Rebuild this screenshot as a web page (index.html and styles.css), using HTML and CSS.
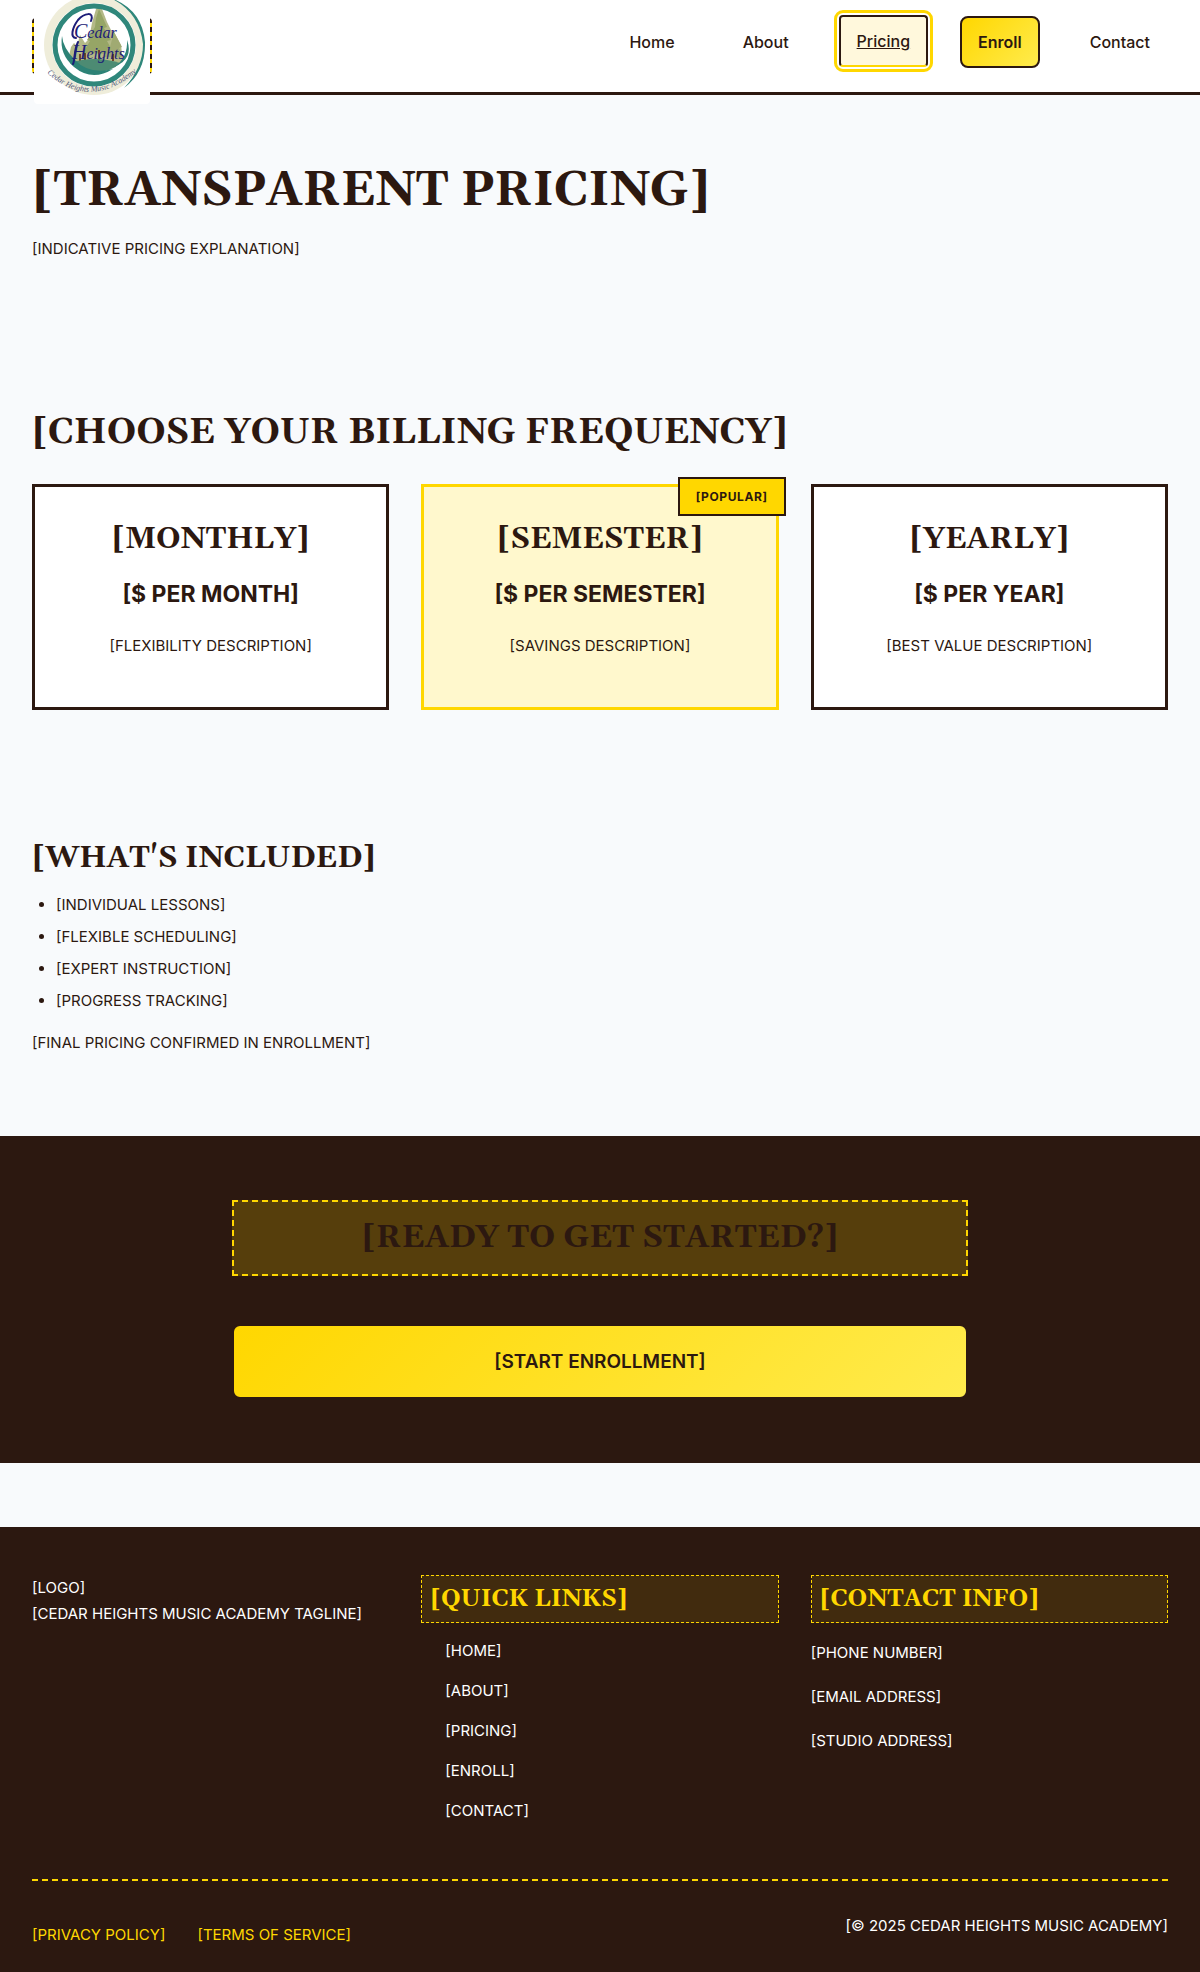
FILE: index.html
```html
<!DOCTYPE html>
<html lang="en">
<head>
<meta charset="utf-8">
<meta name="viewport" content="width=device-width, initial-scale=1">
<title>Pricing - Cedar Heights Music Academy</title>
<link rel="stylesheet" href="styles.css">
</head>
<body>
<header class="site-header">
  <a class="brand" href="#" aria-label="Cedar Heights Music Academy">
    <svg class="brand-logo" viewBox="0 0 116 116">
      <rect width="116" height="116" rx="4" fill="#fff"/>
      <circle cx="60" cy="57" r="50" fill="#efedda"/>
      <circle cx="60" cy="57" r="42" fill="#fff"/>
      <path d="M35 68l2-9 3-4 3 3 3-11 5 8 4-4 3-16 4-14 3-4 3 4 5 13 4 8 3 2 7 13 2 17-8 2-40 1z" fill="#b3b987"/>
      <path d="M62 30l3-9 8 18-3 1 7 12-4 1 7 13-31-1 7-12-3-1 8-13z" fill="#96a566"/>
      <path d="M80 44l8 15-3 1 4 9H70l6-10z" fill="#a0aa72"/>
      <path d="M46 66v7M51 65v9M65 62v12M79 66v7" stroke="#70452b" stroke-width="2"/>
      <path d="M36 75q24-8 50 0-8 9-25 9-16 0-25-9z" fill="#4d8b73"/>
      <path d="M28 48q-3 18 12 31 18 15 39 2-24 6-38-9-12-12-13-24z" fill="#2d8276"/>
      <path d="M93 52q1 18-13 27 20-8 13-27z" fill="#2d8276"/>
      <circle cx="60" cy="57" r="39" fill="none" stroke="#2f877b" stroke-width="5"/>
      <path d="M74 9Q108 20 111 54Q112 84 90 100Q109 80 109 56Q105 22 74 9z" fill="#2f877b"/>
      <path d="M57 33C61 23 50 25 44 32C38 40 36 50 42 50M44 54C40 62 41 72 39 76" fill="none" stroke="#1c1c78" stroke-width="2" stroke-linecap="round"/>
      <g class="logo-script">
        <text x="40" y="50"><tspan class="logo-initial">C</tspan>edar</text>
        <text x="38" y="71"><tspan class="logo-initial">H</tspan>eights</text>
      </g>
      <path id="logo-arc" d="M13 85Q56 124 105 82" fill="none"/>
      <text class="logo-motto"><textPath href="#logo-arc">Cedar Heights Music Academy</textPath></text>
    </svg>
  </a>
  <nav class="main-nav" aria-label="Main">
    <a class="nav-link" href="#">Home</a>
    <a class="nav-link" href="#">About</a>
    <a class="nav-link nav-current" href="#" aria-current="page">Pricing</a>
    <a class="nav-link nav-enroll" href="#">Enroll</a>
    <a class="nav-link" href="#">Contact</a>
  </nav>
</header>
<main>
  <section class="section">
    <h1 class="title-xl">[TRANSPARENT PRICING]</h1>
    <p>[INDICATIVE PRICING EXPLANATION]</p>
  </section>
  <section class="section section-plans">
    <h2 class="title-lg">[CHOOSE YOUR BILLING FREQUENCY]</h2>
    <div class="plans">
      <article class="plan">
        <h3 class="title-md">[MONTHLY]</h3>
        <p class="price">[$ PER MONTH]</p>
        <p>[FLEXIBILITY DESCRIPTION]</p>
      </article>
      <article class="plan plan-popular">
        <span class="badge">[POPULAR]</span>
        <h3 class="title-md">[SEMESTER]</h3>
        <p class="price">[$ PER SEMESTER]</p>
        <p>[SAVINGS DESCRIPTION]</p>
      </article>
      <article class="plan">
        <h3 class="title-md">[YEARLY]</h3>
        <p class="price">[$ PER YEAR]</p>
        <p>[BEST VALUE DESCRIPTION]</p>
      </article>
    </div>
  </section>
  <section class="section">
    <h3 class="title-md title-list">[WHAT'S INCLUDED]</h3>
    <ul class="included">
      <li>[INDIVIDUAL LESSONS]</li>
      <li>[FLEXIBLE SCHEDULING]</li>
      <li>[EXPERT INSTRUCTION]</li>
      <li>[PROGRESS TRACKING]</li>
    </ul>
    <p>[FINAL PRICING CONFIRMED IN ENROLLMENT]</p>
  </section>
  <section class="cta">
    <div class="cta-inner">
      <h2 class="cta-title">[READY TO GET STARTED?]</h2>
      <button class="cta-button" type="button">[START ENROLLMENT]</button>
    </div>
  </section>
</main>
<footer class="site-footer">
  <div class="footer-columns">
    <div>
      <div>[LOGO]</div>
      <div>[CEDAR HEIGHTS MUSIC ACADEMY TAGLINE]</div>
    </div>
    <div>
      <h4 class="footer-title">[QUICK LINKS]</h4>
      <ul class="footer-links">
        <li><a href="#">[HOME]</a></li>
        <li><a href="#">[ABOUT]</a></li>
        <li><a href="#">[PRICING]</a></li>
        <li><a href="#">[ENROLL]</a></li>
        <li><a href="#">[CONTACT]</a></li>
      </ul>
    </div>
    <div>
      <h4 class="footer-title">[CONTACT INFO]</h4>
      <address class="contact">
        <span>[PHONE NUMBER]</span>
        <span>[EMAIL ADDRESS]</span>
        <span>[STUDIO ADDRESS]</span>
      </address>
    </div>
  </div>
  <div class="footer-bottom">
    <div class="legal">
      <a href="#">[PRIVACY POLICY]</a>
      <a href="#">[TERMS OF SERVICE]</a>
    </div>
    <p>[© 2025 CEDAR HEIGHTS MUSIC ACADEMY]</p>
  </div>
</footer>
</body>
</html>
```
FILE: styles.css
```css
:root {
  --dark: #2c1810;
  --gold: #ffd700;
  --gold-light: #ffeb4d;
  --page: #f8fafc;
  --serif: Georgia, Gelasio, "Liberation Serif", serif;
}

* { box-sizing: border-box; }

body {
  margin: 0;
  background: var(--page);
  color: var(--dark);
  font: 15px/26px Inter, "Liberation Sans", sans-serif;
}

h1, h2, h3, h4, p, ul { margin: 0; padding: 0; }
a { color: inherit; text-decoration: none; }

.site-header {
  display: flex;
  align-items: center;
  justify-content: space-between;
  height: 95px;
  padding: 0 32px;
  background: #fff;
  border-bottom: 3px solid var(--dark);
}

.brand {
  display: flex;
  align-items: center;
  justify-content: center;
  width: 120px;
  height: 56px;
  border-radius: 4px;
  background: repeating-linear-gradient(var(--dark) 0 5px, var(--gold) 5px 9px);
}

.brand-logo {
  flex: none;
  width: 116px;
  height: 116px;
}

.logo-script {
  fill: #1c1c78;
  font: italic 16px "Liberation Serif", serif;
}

.logo-initial { font-size: 20px; }

.logo-motto {
  fill: #4f5578;
  font: italic 8px "Liberation Serif", serif;
}

.main-nav {
  display: flex;
  gap: 32px;
  padding-bottom: 8px;
  font-size: 16px;
}

.nav-link {
  padding: 11px 16px;
  border: 2px solid transparent;
  border-radius: 4px;
  font-weight: 500;
}

.nav-current {
  background: #fff8dc;
  border-color: var(--dark) var(--dark) var(--gold);
  outline: 3px solid var(--gold);
  outline-offset: 2px;
  text-decoration: underline;
  transform: translateY(-1px);
}

.nav-enroll {
  background: linear-gradient(135deg, var(--gold), var(--gold-light));
  border-color: var(--dark);
  border-radius: 8px;
  font-weight: 600;
}

.section { padding: 64px 32px 80px; }
.section-plans { padding-bottom: 64px; }

.title-xl, .title-lg, .title-md, .cta-title, .footer-title {
  font-family: var(--serif);
  font-weight: 700;
}

.title-xl { margin-bottom: 14px; font-size: 48px; line-height: 63px; }
.title-lg { margin-bottom: 24px; font-size: 36px; line-height: 54px; }
.title-md { margin-bottom: 16px; font-size: 30px; line-height: 40px; }
.title-list { margin-bottom: 14px; }

.plans {
  display: grid;
  grid-template-columns: repeat(3, 1fr);
  gap: 32px;
}

.plan {
  position: relative;
  padding: 32px 32px 48px;
  border: 3px solid var(--dark);
  background: #fff;
  text-align: center;
}

.plan-popular {
  border-color: var(--gold);
  background: #fff8cd;
}

.badge {
  position: absolute;
  top: -10px;
  right: -10px;
  padding: 8px 16px;
  border: 2px solid var(--dark);
  background: var(--gold);
  font-size: 12px;
  line-height: 19px;
  font-weight: 700;
  letter-spacing: 0.05em;
}

.price {
  margin-bottom: 20px;
  font-size: 23px;
  line-height: 38px;
  font-weight: 700;
}

.included {
  display: flex;
  flex-direction: column;
  gap: 6px;
  margin-bottom: 16px;
  padding-left: 24px;
}

.cta {
  padding: 64px 32px;
  background: var(--dark);
}

.cta-inner {
  display: flex;
  flex-direction: column;
  gap: 48px;
  max-width: 736px;
  margin: 0 auto;
}

.cta-title {
  padding: 16px;
  border: 2px dashed var(--gold);
  background: rgba(255, 215, 0, 0.2);
  font-size: 32px;
  line-height: 40px;
  text-align: center;
}

.cta-button {
  padding: 20px 32px;
  border: 2px solid var(--dark);
  border-radius: 8px;
  background: linear-gradient(135deg, var(--gold), var(--gold-light));
  color: var(--dark);
  font: 600 19px/31px Inter, "Liberation Sans", sans-serif;
}

.site-footer {
  margin-top: 64px;
  padding: 48px 32px 16px;
  background: var(--dark);
  color: #fff;
}

.footer-columns {
  display: grid;
  grid-template-columns: repeat(3, 1fr);
  gap: 32px;
  margin-bottom: 48px;
}

.footer-title {
  margin-bottom: 8px;
  padding: 8px;
  border: 1px dashed var(--gold);
  background: rgba(255, 215, 0, 0.1);
  color: var(--gold);
  font-size: 24px;
  line-height: 30px;
}

.footer-links {
  padding-left: 24px;
  list-style: none;
  line-height: 40px;
}

.contact {
  display: flex;
  flex-direction: column;
  font-style: normal;
  line-height: 44px;
}

.footer-bottom {
  display: flex;
  justify-content: space-between;
  padding-top: 32px;
  border-top: 2px dashed var(--gold);
}

.legal {
  display: flex;
  gap: 32px;
  color: var(--gold);
  line-height: 44px;
}
```
